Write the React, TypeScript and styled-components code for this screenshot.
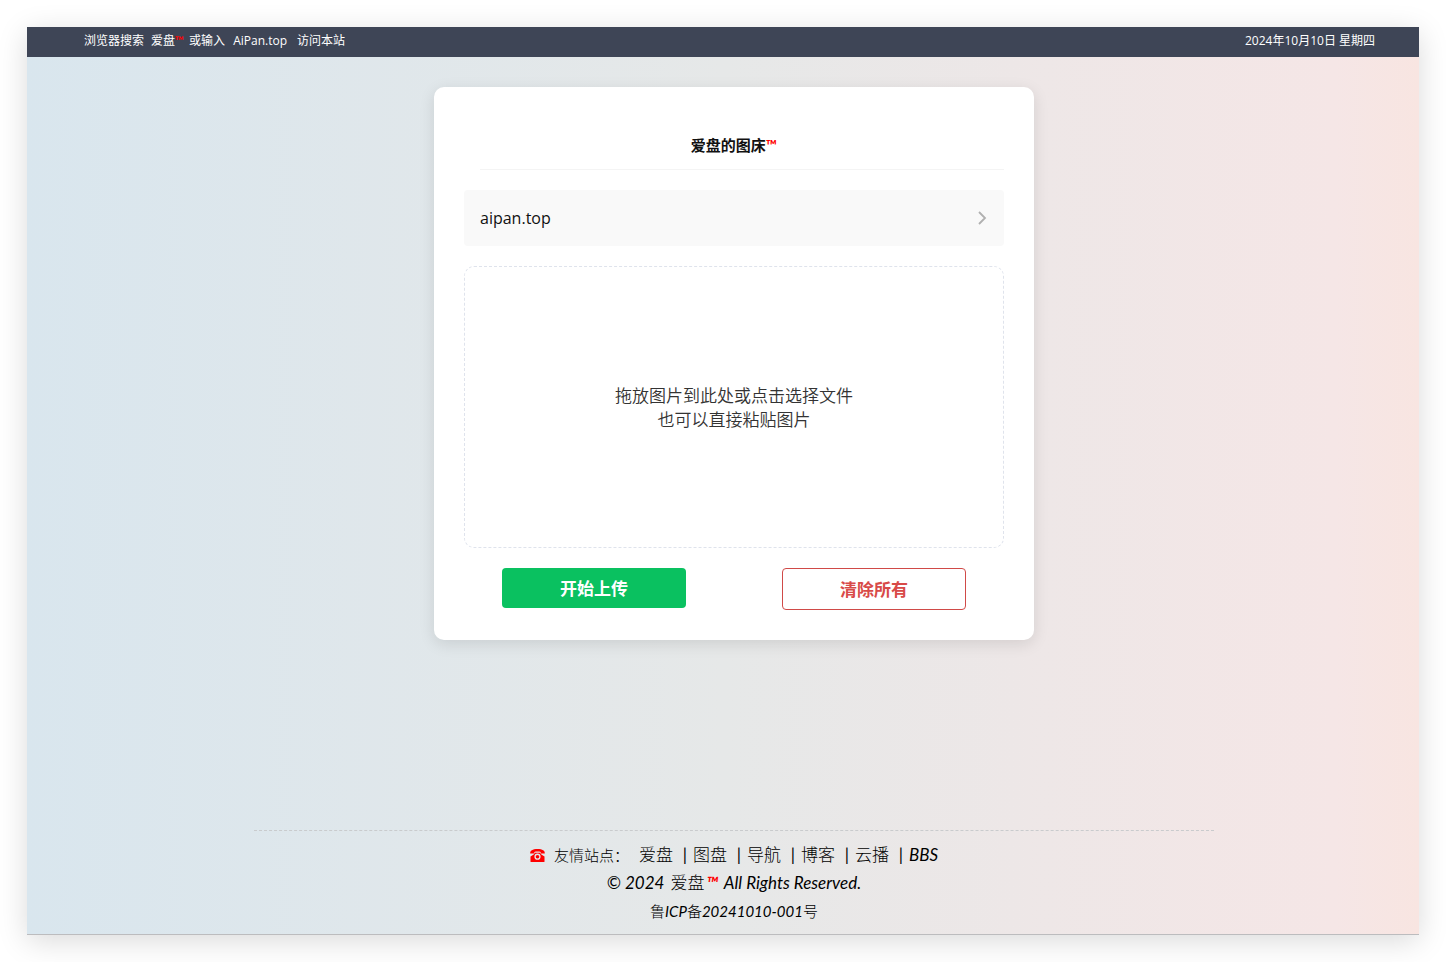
import React from "react";
import styled, { createGlobalStyle } from "styled-components";

const GlobalStyle = createGlobalStyle`
  *, *::before, *::after { box-sizing: border-box; }
  body {
    margin: 0;
    background: #fff;
    color: #111;
    font-family: "Open Sans", "Noto Sans CJK SC", sans-serif;
  }
  a { color: inherit; text-decoration: none; }
`;

const Desktop = styled.div`
  display: flex;
  min-height: 100vh;
  padding: 27px;
`;

const Page = styled.div`
  flex: 1;
  display: flex;
  flex-direction: column;
  background: linear-gradient(to right, #d9e6ee 0%, #e6e8e8 50%, #f5e6e6 94%, #f8e5e1 100%);
  border-bottom: 1px solid #bcbcbe;
  box-shadow: 0 6px 28px rgba(0, 0, 0, 0.15);
`;

const TopBar = styled.header`
  display: flex;
  justify-content: space-between;
  height: 30px;
  padding: 0 44px 0 57px;
  background: #3e4556;
  color: #fff;
  font-size: 12px;
  line-height: 28px;
`;

const SearchHint = styled.div`
  display: flex;
  white-space: pre;
`;

const HintText = styled.span<{ $after?: number }>`
  margin-right: ${(p) => p.$after ?? 0}px;
`;

const Trademark = styled.span`
  color: #f00;
  font-family: Lato, sans-serif;
  font-weight: 700;
  line-height: 1;
`;

const Main = styled.main`
  display: flex;
  justify-content: center;
  padding: 30px 0 40px 22px;
`;

const Card = styled.section`
  width: 600px;
  max-width: 100%;
  padding: 30px;
  background: #fff;
  border-radius: 10px;
  box-shadow: 0 4px 16px rgba(0, 0, 0, 0.11);
`;

const Title = styled.h1`
  margin: 0 0 20px 16px;
  padding: 16px 16px 12px 0;
  border-bottom: 1px solid #f4f4f4;
  font-size: 15px;
  line-height: 24px;
  font-weight: 700;
  text-align: center;
`;

const HostLink = styled.a`
  display: flex;
  align-items: center;
  justify-content: space-between;
  height: 56px;
  margin-bottom: 20px;
  padding: 0 16px;
  border-radius: 4px;
  background: #f9f9f9;
  font-size: 16px;
  line-height: 24px;
`;

const DropArea = styled.label`
  display: flex;
  align-items: center;
  justify-content: center;
  height: 282px;
  margin-bottom: 20px;
  padding-top: 2px;
  border: 1px dashed #dfe3ec;
  border-radius: 10px;
  color: #333;
  font-size: 17px;
  line-height: 24px;
  font-weight: 350;
  text-align: center;
  cursor: pointer;
`;

const FileInput = styled.input`
  display: none;
`;

const Actions = styled.div`
  display: flex;
  align-items: flex-start;
  justify-content: space-between;
  padding: 0 38px;
`;

const ActionButton = styled.button<{ $outlined?: boolean }>`
  width: 184px;
  padding: 9px 0 7px;
  border: ${(p) => (p.$outlined ? "1px solid #d04a48" : "0")};
  border-radius: 4px;
  background: ${(p) => (p.$outlined ? "#fff" : "#0ac160")};
  color: ${(p) => (p.$outlined ? "#d84a48" : "#fff")};
  font-family: inherit;
  font-size: 17px;
  line-height: 24px;
  font-weight: 700;
  cursor: pointer;
`;

const FooterWrap = styled.div`
  display: flex;
  justify-content: center;
  margin-top: auto;
  padding-left: 22px;
`;

const Footer = styled.footer`
  width: 960px;
  max-width: 100%;
  padding: 10px 0 9px;
  border-top: 1px dashed #c9cbcd;
  color: #000;
  font-family: Lato, "Noto Sans CJK SC", sans-serif;
`;

const FooterLine = styled.div<{ $size: number }>`
  display: flex;
  align-items: center;
  justify-content: center;
  height: 28px;
  font-size: ${(p) => p.$size}px;
  line-height: 28px;
  font-weight: 300;
  white-space: pre;
`;

const Copyright = styled(FooterLine)`
  gap: 2px;
`;

const Script = styled.span`
  font-style: italic;
  font-weight: 400;
`;

const FooterMark = styled(Trademark)`
  font-style: italic;
  line-height: inherit;
`;

const SiteLabel = styled.span`
  margin: 0 10px 0 9px;
  font-size: 15px;
`;

const SiteList = styled.nav`
  display: flex;
`;

const SiteLink = styled.a`
  & + &::before {
    content: "|";
    display: inline-block;
    width: 20px;
    padding-left: 4px;
    text-align: center;
    font-weight: 400;
  }
`;

const PhoneIcon = () => (
  <svg width="15" height="13" viewBox="0 0 15 13" aria-hidden="true">
    <path
      fill="#f00"
      d="M.2 4.600C0 1.500 2.500 0 7.500 0S15 1.500 14.800 4.600H10.700V2.900C9 2.300 6 2.300 4.300 2.900V4.600Z"
    />
    <path
      fill="#f00"
      fillRule="evenodd"
      d="M5 3.700h5L11.300 5.600 14.500 7.600V12.400c0 .4-.2.6-.6.6H1.100c-.4 0-.6-.2-.6-.6V7.600L3.700 5.600ZM7.500 4.600a3.100 3.100 0 1 0 0 6.200 3.100 3.100 0 0 0 0-6.200Zm0 1.300a1.800 1.800 0 1 1 0 3.600 1.800 1.800 0 0 1 0-3.600Z"
    />
  </svg>
);

const Chevron = () => (
  <svg width="12" height="16" viewBox="0 0 12 16" aria-hidden="true">
    <path d="M3 2l6 6-6 6" fill="none" stroke="#b0b0b0" strokeWidth="1.800" />
  </svg>
);

const sites = ["爱盘", "图盘", "导航", "博客", "云播"];

export default function App() {
  return (
    <Desktop>
      <GlobalStyle />
      <Page>
        <TopBar>
          <SearchHint>
            <HintText $after={7}>浏览器搜索</HintText>
            <HintText $after={5}>
              爱盘<Trademark>™</Trademark>
            </HintText>
            <HintText $after={8}>或输入</HintText>
            <HintText $after={10}>AiPan.top</HintText>
            <HintText>访问本站</HintText>
          </SearchHint>
          <time dateTime="2024-10-10">2024年10月10日 星期四</time>
        </TopBar>
        <Main>
          <Card>
            <Title>
              爱盘的图床<Trademark>™</Trademark>
            </Title>
            <HostLink href="#">
              <span>aipan.top</span>
              <Chevron />
            </HostLink>
            <DropArea>
              <FileInput type="file" accept="image/*" multiple />
              <span>
                拖放图片到此处或点击选择文件
                <br />
                也可以直接粘贴图片
              </span>
            </DropArea>
            <Actions>
              <ActionButton type="button">开始上传</ActionButton>
              <ActionButton type="button" $outlined>
                清除所有
              </ActionButton>
            </Actions>
          </Card>
        </Main>
        <FooterWrap>
          <Footer>
            <FooterLine $size={17}>
              <PhoneIcon />
              <SiteLabel>友情站点：</SiteLabel>
              <SiteList>
                {sites.map((site) => (
                  <SiteLink key={site} href="#">
                    {site}
                  </SiteLink>
                ))}
                <SiteLink href="#">
                  <Script>BBS</Script>
                </SiteLink>
              </SiteList>
            </FooterLine>
            <Copyright $size={17}>
              <Script>© 2024 </Script>
              <span>爱盘</span>
              <FooterMark>™</FooterMark>
              <Script> All Rights Reserved.</Script>
            </Copyright>
            <FooterLine $size={15}>
              <span>鲁</span>
              <Script>ICP</Script>
              <span>备</span>
              <Script>20241010-001</Script>
              <span>号</span>
            </FooterLine>
          </Footer>
        </FooterWrap>
      </Page>
    </Desktop>
  );
}
